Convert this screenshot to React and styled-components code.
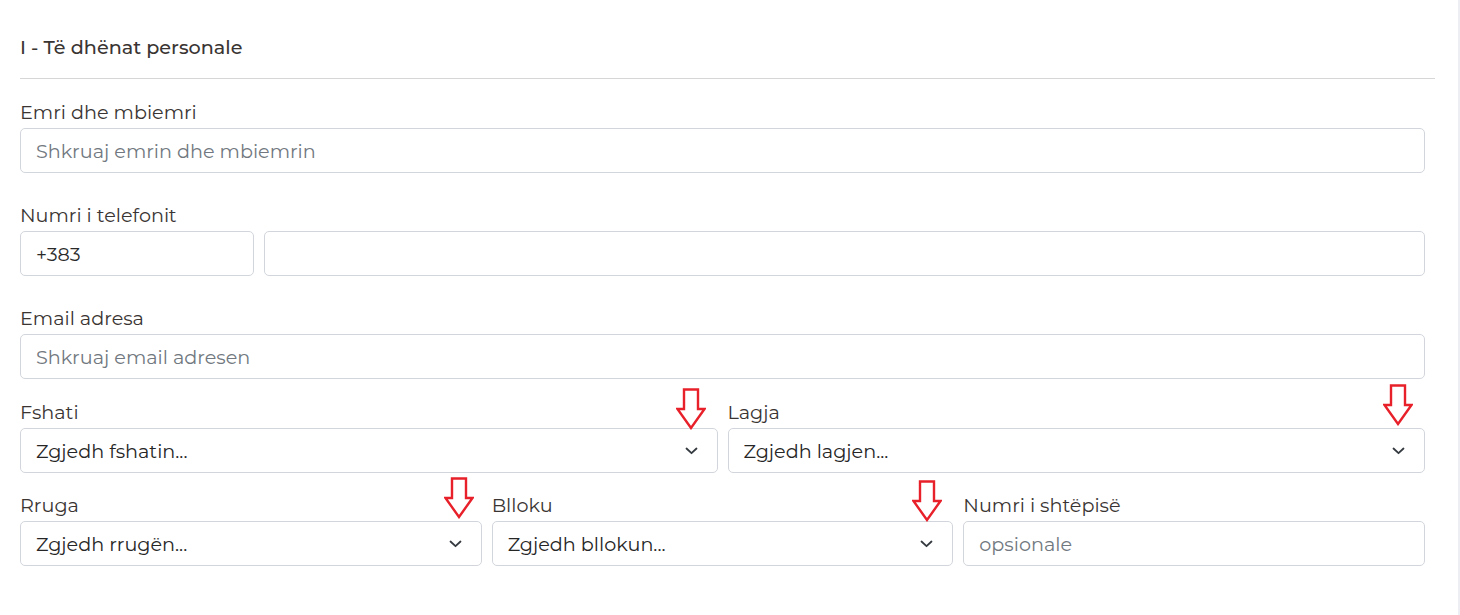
import React from "react";
import styled, { createGlobalStyle } from "styled-components";

const GlobalStyle = createGlobalStyle`
  html, body {
    margin: 0;
    padding: 0;
    background: #fff;
  }
  body {
    font-family: "Montserrat", "DejaVu Sans", "Noto Sans", sans-serif;
    color: #3b3b3b;
  }
`;

const Page = styled.div`
  display: flex;
  width: 1460px;
  min-height: 615px;
`;

const Main = styled.div`
  flex: 1;
  padding: 34px 23px 0 20px;
`;

const EdgeStrip = styled.div`
  width: 2px;
  background: #eceef4;
`;

const SectionTitle = styled.h2`
  margin: 0;
  font-size: 19.2px;
  font-weight: 500;
  line-height: 26px;
  color: #3a3533;
`;

const Divider = styled.hr`
  margin: 18px 0 21px 0;
  border: 0;
  border-top: 1px solid #d6d6d6;
`;

const Fields = styled.div`
  padding-right: 10px;
`;

const Row = styled.div`
  display: grid;
  grid-template-columns: ${(p) => p.cols || "1fr"};
  gap: 10px;
  margin-bottom: ${(p) => p.gap ?? 30}px;
`;

const Field = styled.div`
  display: flex;
  flex-direction: column;
`;

const Label = styled.label`
  font-size: 19.2px;
  line-height: 25px;
  margin-bottom: 3px;
  color: #3a3533;
`;

const InputBox = styled.input`
  box-sizing: border-box;
  width: 100%;
  height: 45px;
  padding: 0 15px;
  border: 1px solid #d2d6dc;
  border-radius: 5px;
  font-family: inherit;
  font-size: 19.2px;
  color: #2a2a2a;
  background: #fff;
  outline: none;

  &::placeholder {
    color: #717880;
  }
`;

const PhoneGroup = styled.div`
  display: grid;
  grid-template-columns: 234px 1fr;
  gap: 10px;
`;

const SelectWrap = styled.div`
  position: relative;
  box-sizing: border-box;
  height: 45px;
  display: flex;
  align-items: center;
  justify-content: space-between;
  padding: 0 19px 0 15px;
  border: 1px solid #d2d6dc;
  border-radius: 5px;
  font-size: 19.2px;
  color: #262626;
  background: #fff;
`;

const Chevron = styled.svg`
  width: 13px;
  height: 8px;
  flex: none;
`;

const Pointer = styled.svg`
  position: absolute;
  right: ${(p) => p.right}px;
  bottom: ${(p) => p.bottom}px;
  width: 30px;
  height: 42px;
  pointer-events: none;
`;

function Select({ text, arrowRight = 11, arrowBottom = 42 }) {
  return (
    <SelectWrap>
      <span>{text}</span>
      <Chevron viewBox="0 0 13 8">
        <path d="M1.5 1.5 L6.5 6.2 L11.5 1.5" fill="none" stroke="#343a40" strokeWidth="1.8" strokeLinecap="round" strokeLinejoin="round" />
      </Chevron>
      <Pointer viewBox="0 0 30 42" right={arrowRight} bottom={arrowBottom}>
        <path d="M8 1.5 H22 V21 H28.5 L15 40 L1.5 21 H8 Z" fill="none" stroke="#e8202a" strokeWidth="2.4" strokeLinejoin="miter" />
      </Pointer>
    </SelectWrap>
  );
}

export default function App() {
  return (
    <>
      <GlobalStyle />
      <Page>
        <Main>
          <SectionTitle>I - Të dhënat personale</SectionTitle>
          <Divider />
          <Fields>
            <Row>
              <Field>
                <Label>Emri dhe mbiemri</Label>
                <InputBox placeholder="Shkruaj emrin dhe mbiemrin" />
              </Field>
            </Row>
            <Row>
              <Field>
                <Label>Numri i telefonit</Label>
                <PhoneGroup>
                  <InputBox defaultValue="+383" />
                  <InputBox />
                </PhoneGroup>
              </Field>
            </Row>
            <Row gap={21}>
              <Field>
                <Label>Email adresa</Label>
                <InputBox placeholder="Shkruaj email adresen" />
              </Field>
            </Row>
            <Row cols="1fr 1fr" gap={20}>
              <Field>
                <Label>Fshati</Label>
                <Select text="Zgjedh fshatin..." arrowRight={11} arrowBottom={42} />
              </Field>
              <Field>
                <Label>Lagja</Label>
                <Select text="Zgjedh lagjen..." arrowRight={11} arrowBottom={46} />
              </Field>
            </Row>
            <Row cols="1fr 1fr 1fr" gap={0}>
              <Field>
                <Label>Rruga</Label>
                <Select text="Zgjedh rrugën..." arrowRight={7} arrowBottom={46} />
              </Field>
              <Field>
                <Label>Blloku</Label>
                <Select text="Zgjedh bllokun..." arrowRight={10} arrowBottom={43} />
              </Field>
              <Field>
                <Label>Numri i shtëpisë</Label>
                <InputBox placeholder="opsionale" />
              </Field>
            </Row>
          </Fields>
        </Main>
        <EdgeStrip />
      </Page>
    </>
  );
}
